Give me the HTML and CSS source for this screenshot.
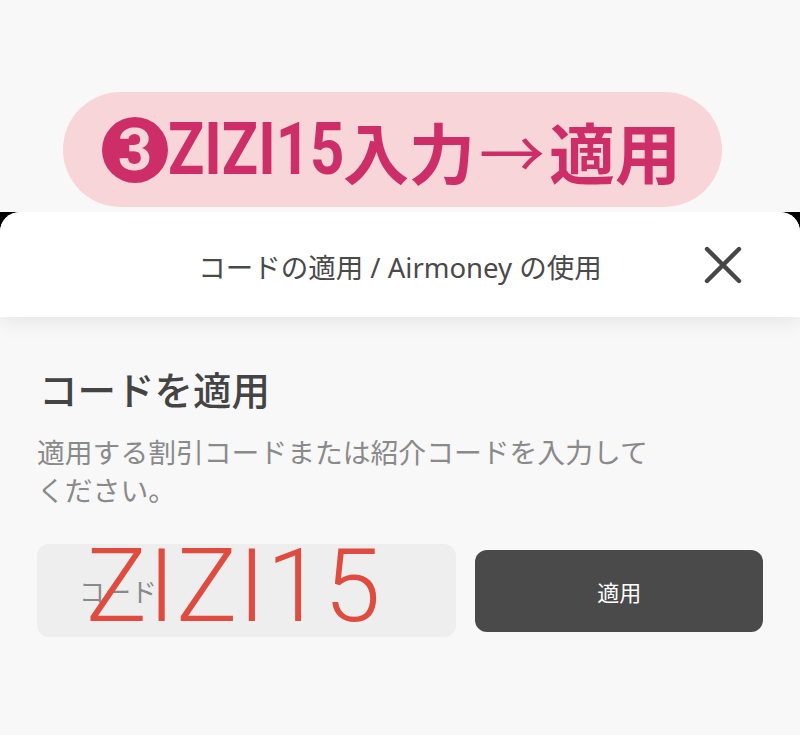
FILE: index.html
```html
<!DOCTYPE html>
<html lang="ja">
<head>
<meta charset="utf-8">
<link rel="stylesheet" href="styles.css">
</head>
<body>
  <div class="top">
    <div class="pill">
      <span class="num">3</span><span class="code"><span class="code-text">ZIZI15</span></span><span class="cjk">入力</span><span class="arrow">→</span><span class="cjk">適用</span>
    </div>
  </div>
  <div class="backdrop">
    <div class="sheet">
      <header class="sheet-head">
        <span></span>
        <h1 class="sheet-title">コードの適用 / Airmoney の使用</h1>
        <button class="close" aria-label="閉じる">
          <svg width="38" height="38" viewBox="0 0 38 38"><path d="M3 3 L35 35 M35 3 L3 35" stroke="#474747" stroke-width="4.4" stroke-linecap="round" fill="none"/></svg>
        </button>
      </header>
      <main class="sheet-body">
        <h2 class="heading">コードを適用</h2>
        <p class="desc">適用する割引コードまたは紹介コードを入力してください。</p>
        <div class="form">
          <div class="field">
            <span class="placeholder">コード</span>
            <span class="overlay">ZIZI15</span>
          </div>
          <button class="apply">適用</button>
        </div>
      </main>
    </div>
  </div>
</body>
</html>
```

FILE: styles.css
```css
* { box-sizing: border-box; }
html, body { margin: 0; padding: 0; }
body {
  background: #f8f8f8;
  font-family: "Noto Sans", "Noto Sans CJK JP", sans-serif;
  height: 735px;
  overflow: hidden;
}
.top {
  height: 212px;
  padding-top: 92px;
  padding-left: 63px;
}
.pill {
  width: 659px;
  height: 115px;
  border-radius: 58px;
  background: #f8d5d8;
  display: flex;
  align-items: center;
  padding-left: 39px;
  color: #cd2e68;
  font-weight: 700;
  line-height: 1;
}
.num {
  flex: none;
  width: 66px;
  height: 66px;
  border-radius: 50%;
  background: #cd2e68;
  color: #f8d5d8;
  font-family: Roboto, sans-serif;
  font-size: 60px;
  font-weight: 700;
  display: flex;
  align-items: center;
  justify-content: center;
  margin-right: 2px;
}
.code {
  flex: none;
  width: 173px;
  white-space: nowrap;
  font-family: Roboto, sans-serif;
  font-size: 73px;
  font-weight: 700;
}
.code-text {
  display: inline-block;
  transform: scaleX(0.82);
  transform-origin: left center;
  margin-left: -2px;
}
.cjk {
  font-family: "Noto Sans CJK JP", sans-serif;
  font-size: 66px;
  font-weight: 700;
  white-space: nowrap;
}
.arrow {
  font-family: "Noto Sans CJK JP", sans-serif;
  font-size: 66px;
  font-weight: 400;
  margin: 0 4px;
}
.backdrop {
  background: #000;
  height: 523px;
}
.sheet {
  background: #f8f8f8;
  height: 100%;
  border-radius: 20px 20px 0 0;
  overflow: hidden;
}
.sheet-head {
  height: 105px;
  background: #fff;
  display: grid;
  grid-template-columns: 1fr auto 1fr;
  align-items: center;
  box-shadow: 0 6px 18px rgba(0,0,0,0.07);
  position: relative;
}
.sheet-title {
  margin: 0;
  font-size: 27.5px;
  font-weight: 400;
  color: #4a4a4a;
  padding-top: 2px;
  white-space: nowrap;
}
.close {
  justify-self: end;
  margin-right: 58px;
  border: 0;
  background: none;
  padding: 0;
  width: 38px;
  height: 38px;
  display: flex;
}
.sheet-body {
  padding: 46px 37px 0 37px;
}
.heading {
  margin: 0;
  font-size: 38.5px;
  font-weight: 500;
  color: #444;
  line-height: 54px;
  padding-left: 2px;
}
.desc {
  margin: 16px 0 0 0;
  width: 625px;
  font-size: 27.8px;
  line-height: 38px;
  color: #8a8a8a;
}
.form {
  margin-top: 35px;
  display: flex;
  align-items: center;
  gap: 19px;
}
.field {
  width: 420px;
  height: 93px;
  background: #eeeeee;
  border-radius: 12px;
  display: flex;
  align-items: center;
  padding-left: 42px;
  position: relative;
}
.placeholder {
  font-size: 26px;
  color: #8a8a8a;
  font-family: "Noto Sans CJK JP", sans-serif;
}
.overlay {
  position: absolute;
  left: 49px;
  top: -9px;
  font-family: Roboto, sans-serif;
  font-weight: 300;
  font-size: 102px;
  letter-spacing: 1px;
  line-height: 1;
  color: #e04b3f;
  white-space: nowrap;
}
.apply {
  width: 288px;
  height: 82px;
  background: #4a4a4a;
  border: 0;
  border-radius: 12px;
  color: #fff;
  font-family: "Noto Sans CJK JP", sans-serif;
  font-size: 22px;
}
```
